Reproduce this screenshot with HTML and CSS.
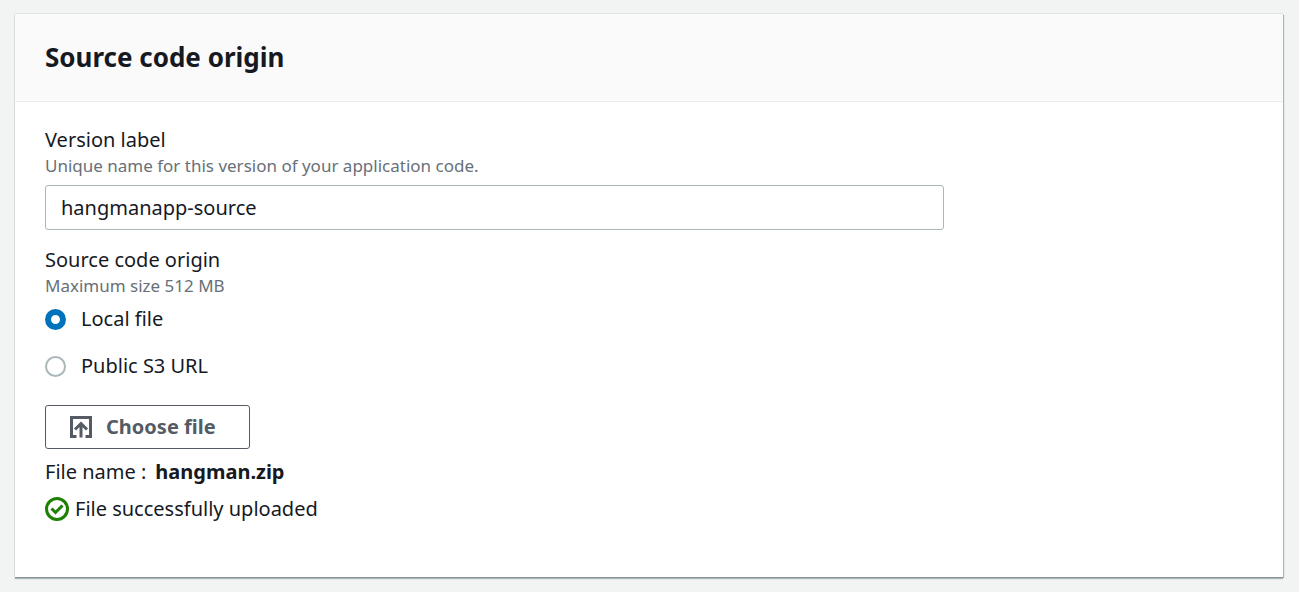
FILE: index.html
```html
<!DOCTYPE html>
<html lang="en">
<head>
<meta charset="utf-8">
<title>Source code origin</title>
<link rel="stylesheet" href="styles.css">
</head>
<body>
<main class="panel">
  <header class="panel-header">
    <h2 class="panel-title">Source code origin</h2>
  </header>
  <form class="panel-body">
    <div class="field">
      <label class="field-label" for="version">Version label</label>
      <p class="hint" id="version-hint">Unique name for this version of your application code.</p>
      <input class="text-input" id="version" type="text" value="hangmanapp-source" aria-describedby="version-hint">
    </div>
    <fieldset class="field origin">
      <legend class="field-label">Source code origin</legend>
      <p class="hint">Maximum size 512 MB</p>
      <div class="options">
        <label class="option"><input class="radio" type="radio" name="origin" checked><span>Local file</span></label>
        <label class="option"><input class="radio" type="radio" name="origin"><span>Public S3 URL</span></label>
      </div>
    </fieldset>
    <button class="choose" type="button">
      <svg class="choose-icon" viewBox="0 0 22 22" aria-hidden="true"><path d="M6.500 20.500H1.500V1.500H20.500V20.500H15.500M11 21.500V8M5 13.500L11 7.500L17 13.500"/></svg>
      <span>Choose file</span>
    </button>
    <p class="file-name"><span>File name :</span> <strong>hangman.zip</strong></p>
    <p class="status">
      <svg class="status-icon" viewBox="0 0 24 24" aria-hidden="true"><circle cx="12" cy="12" r="10.500"/><path d="M6.500 11.500L10.500 15.500L17.500 8.500"/></svg>
      <span>File successfully uploaded</span>
    </p>
  </form>
</main>
</body>
</html>
```
FILE: styles.css
```css
* {
  box-sizing: border-box;
}

body {
  margin: 0;
  padding: 14px 16px 15px 15px;
  background: #f2f3f3;
  color: #16191f;
  font: 20px/30px "Noto Sans", "Open Sans", sans-serif;
}

p {
  margin: 0;
}

.panel {
  background: #fff;
  box-shadow: 0 1px 0 0 #879596, 1px 1px 1px 0 #aab7b8, 0 2px 1px 0 #aab7b8, 0 0 1px 0 #879596;
}

.panel-header {
  padding: 24px 30px;
  background: #fafafa;
  border-bottom: 1px solid #eaeded;
}

.panel-title {
  margin: 0;
  font-size: 26px;
  line-height: 39px;
  font-weight: 700;
}

.panel-body {
  padding: 24px 30px 53px;
}

.field {
  margin: 0 0 16px;
  padding: 0;
  border: 0;
}

.field-label {
  display: block;
  padding: 0;
  line-height: 28px;
}

.hint {
  color: #687078;
  font-size: 17px;
  line-height: 24px;
}

.text-input {
  display: block;
  width: calc(75% - 7px);
  height: 45px;
  margin-top: 7px;
  padding: 0 15px;
  background: #fff;
  border: 1px solid #aab7b8;
  border-radius: 3px;
  color: inherit;
  font: inherit;
}

.origin {
  margin-bottom: 24px;
}

.options {
  display: grid;
  justify-items: start;
  gap: 17px;
  margin-top: 6px;
}

.option {
  display: flex;
  align-items: center;
  gap: 15px;
}

.radio {
  appearance: none;
  width: 21px;
  height: 21px;
  margin: 0;
  background: #fff;
  border: 2px solid #aab7b8;
  border-radius: 50%;
}

.radio:checked {
  border: 6px solid #0073bb;
}

.choose {
  display: flex;
  align-items: center;
  gap: 14px;
  height: 44px;
  padding: 0 33px 0 24px;
  background: #fff;
  border: 1px solid #545b64;
  border-radius: 3px;
  color: #545b64;
  font: inherit;
  font-weight: 700;
}

.choose-icon {
  width: 22px;
  height: 22px;
  fill: none;
  stroke: currentColor;
  stroke-width: 3;
}

.file-name {
  display: flex;
  gap: 9px;
  margin-top: 8px;
}

.status {
  display: flex;
  align-items: center;
  gap: 6px;
  margin-top: 7px;
}

.status-icon {
  width: 24px;
  height: 24px;
  fill: none;
  stroke: #1d8102;
  stroke-width: 3;
}
```
